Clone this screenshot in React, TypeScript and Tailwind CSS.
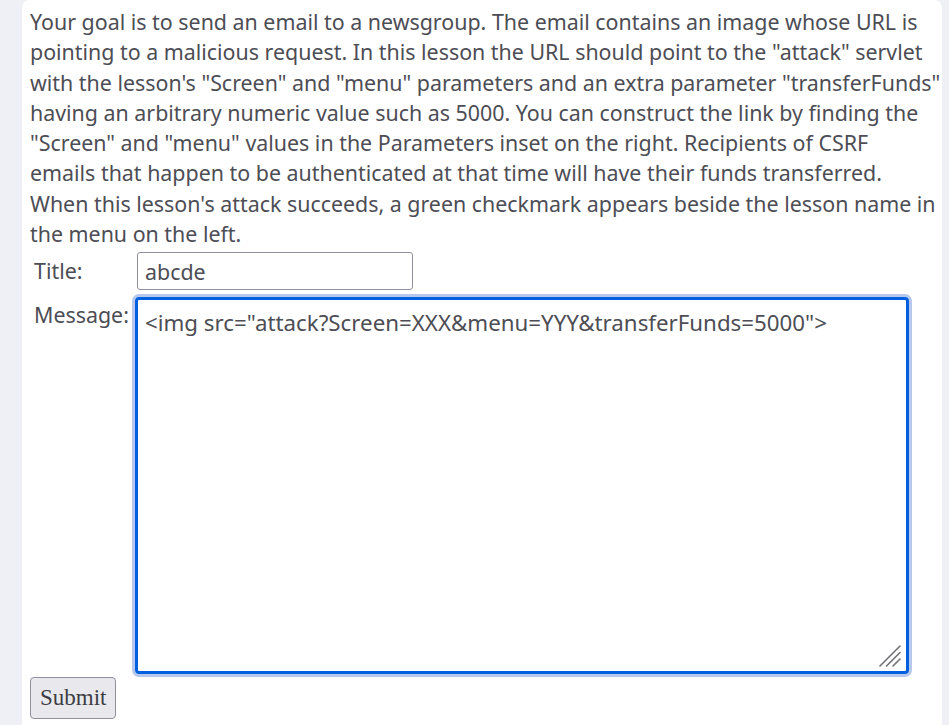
import React from "react";

const font = '"Noto Sans", "Open Sans", sans-serif';

const lines = [
  "Your goal is to send an email to a newsgroup. The email contains an image whose URL is",
  'pointing to a malicious request. In this lesson the URL should point to the "attack" servlet',
  'with the lesson\'s "Screen" and "menu" parameters and an extra parameter "transferFunds"',
  "having an arbitrary numeric value such as 5000. You can construct the link by finding the",
  '"Screen" and "menu" values in the Parameters inset on the right. Recipients of CSRF',
  "emails that happen to be authenticated at that time will have their funds transferred.",
  "When this lesson's attack succeeds, a green checkmark appears beside the lesson name in",
  "the menu on the left.",
];

export default function App() {
  return (
    <div className="min-h-[725px] w-[949px] bg-[#eff0f5] pl-[22px] pr-[7px] overflow-hidden">
      <div
        className="bg-white rounded-t-lg min-h-[725px] pl-[8px] pr-[4px] text-[#4d4d55]"
        style={{ fontFamily: font }}
      >
        <p className="text-[21.4px] leading-[30.3px] pt-[7px]">
          {lines.map((l, i) => (
            <span key={i} className="block whitespace-nowrap">
              {l}
            </span>
          ))}
        </p>

        <div className="flex items-center mt-[3px] h-[38px]">
          <span className="w-[107px] pl-[4px] text-[21.4px]">Title:</span>
          <input
            type="text"
            defaultValue="abcde"
            className="w-[276px] h-[38px] border border-[#8f8f9d] rounded-[3px] px-[7px] text-[21.4px] text-[#4d4d55] outline-none"
            style={{ fontFamily: font }}
          />
        </div>

        <div className="flex items-start mt-[7px]">
          <span className="w-[105px] pl-[4px] text-[21.4px] pt-[2px]">Message:</span>
          <div className="relative">
            <textarea
              defaultValue={'<img src="attack?Screen=XXX&menu=YYY&transferFunds=5000">'}
              className="block w-[774px] h-[377px] border-[3px] border-[#0060df] rounded-[4px] ring-[3px] ring-[#b6c9ec] px-[7px] py-[9px] text-[22.3px] leading-[27px] text-[#4d4d55] outline-none resize-none"
              style={{ fontFamily: font }}
            />
            <svg
              className="absolute right-[8px] bottom-[7px] w-[22px] h-[22px]"
              viewBox="0 0 22 22"
            >
              <g stroke="#707076" strokeWidth="1.6" strokeLinecap="round">
                <line x1="21" y1="1" x2="1" y2="21" />
                <line x1="21" y1="7.5" x2="7.5" y2="21" />
                <line x1="21" y1="14" x2="14" y2="21" />
              </g>
            </svg>
          </div>
        </div>

        <button
          className="mt-[3px] h-[42px] px-[9px] bg-[#e9e9ed] border border-[#8f8f9d] rounded-[4px] text-[23px] text-[#3c3c44]"
          style={{ fontFamily: '"Liberation Serif", serif' }}
        >
          Submit
        </button>
      </div>
    </div>
  );
}
